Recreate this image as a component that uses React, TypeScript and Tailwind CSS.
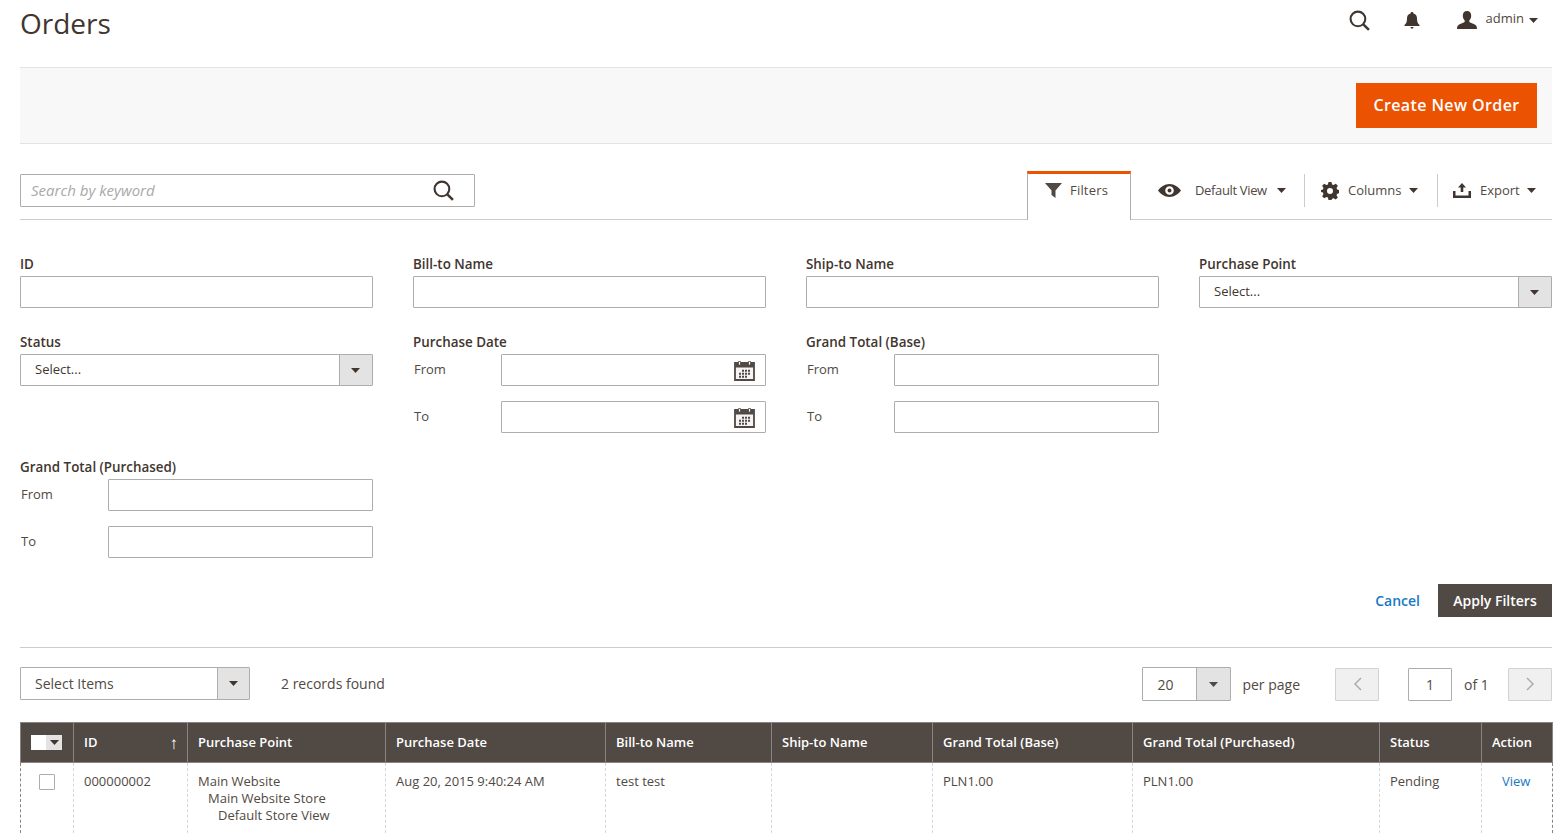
import { ReactNode } from "react";

const Caret = ({ className = "" }: { className?: string }) => (
  <svg width="9" height="5" viewBox="0 0 9 5" className={className}>
    <path d="M0 0h9L4.5 5z" fill="currentColor" />
  </svg>
);

const SearchIcon = ({ size }: { size: number }) => (
  <svg width={size} height={size} viewBox="0 0 20 20" fill="none" stroke="#41362f" strokeWidth="2">
    <circle cx="8.5" cy="8.5" r="7" />
    <path d="M13.6 13.6L19 19" strokeWidth="2.4" />
  </svg>
);

const CalendarIcon = () => (
  <svg width="21" height="21" viewBox="0 0 21 21" className="absolute right-[10px] top-[5px]">
    <path d="M1 3h19v17H1z" fill="#f4f4f4" stroke="#514943" strokeWidth="1.8" />
    <path d="M1 3h19v4.500H1z" fill="#514943" />
    <path d="M4.500 1.500h2v3.500h-2zM14.500 1.500h2v3.500h-2z" fill="#fff" stroke="#514943" strokeWidth="0.8" />
    <path d="M8 9.800h2v2H8zM11 9.800h2v2h-2zM14 9.800h2v2h-2zM5 12.800h2v2H5zM8 12.800h2v2H8zM11 12.800h2v2h-2zM14 12.800h2v2h-2zM5 15.800h2v2H5zM8 15.800h2v2H8zM11 15.800h2v2h-2z" fill="#514943" />
  </svg>
);

const Label = ({ children }: { children: ReactNode }) => (
  <div className="h-[24px] text-[13.4px] leading-[24px] font-semibold text-[#41362f]">{children}</div>
);

const TextBox = ({ children }: { children?: ReactNode }) => (
  <div className="relative h-[32px] w-full rounded-[1px] border border-[#adadad] bg-white">{children}</div>
);

const TextField = ({ label }: { label: string }) => (
  <div>
    <Label>{label}</Label>
    <TextBox />
  </div>
);

const SelectField = ({ label }: { label: string }) => (
  <div>
    <Label>{label}</Label>
    <div className="flex h-[32px] rounded-[1px] border border-[#adadad] bg-white text-[13px] text-[#41362f]">
      <div className="flex-1 pl-[14px] leading-[28px]">Select...</div>
      <div className="flex w-[33px] items-center justify-center border-l border-[#adadad] bg-[#e3e3e3] pr-[2px] text-[#41362f]">
        <Caret />
      </div>
    </div>
  </div>
);

const RangeField = ({ label, calendar }: { label: string; calendar?: boolean }) => (
  <div>
    <Label>{label}</Label>
    <div className="flex flex-col gap-[15px]">
      {["From", "To"].map((bound) => (
        <div key={bound} className="flex items-center">
          <span className="w-[88px] pl-px text-[13px] text-[#514943]">{bound}</span>
          <div className="flex-1">
            <TextBox>{calendar && <CalendarIcon />}</TextBox>
          </div>
        </div>
      ))}
    </div>
  </div>
);

const columns = [
  { label: "ID", width: 114 },
  { label: "Purchase Point", width: 198 },
  { label: "Purchase Date", width: 220 },
  { label: "Bill-to Name", width: 166 },
  { label: "Ship-to Name", width: 161 },
  { label: "Grand Total (Base)", width: 200 },
  { label: "Grand Total (Purchased)", width: 247 },
  { label: "Status", width: 102 },
  { label: "Action", width: 71 },
];

export default function App() {
  return (
    <div className="h-[833px] overflow-hidden bg-white pl-[20px] pr-[13px] font-['Open_Sans',sans-serif] text-[#41362f]">
      <header className="flex h-[67px] justify-between">
        <h1 className="pt-[5px] text-[28px] leading-[36px] font-normal text-[#41362f]">Orders</h1>
        <div className="flex h-[40px] items-center pr-[14px] text-[#41362f]">
          <SearchIcon size={21} />
          <svg width="16" height="17" viewBox="0 0 16 17" className="ml-[34px]">
            <path d="M8 0c1 0 1.500.7 1.500 1.400C12 2 13 4 13 6.500c0 3 .6 5 2.500 6.500v1H.5v-1C2.400 11.500 3 9.500 3 6.500 3 4 4 2 6.500 1.400 6.500.7 7 0 8 0zM6.500 15h3c0 1-.7 1.700-1.500 1.700S6.500 16 6.500 15z" fill="#41362f" />
          </svg>
          <svg width="20" height="18" viewBox="0 0 20 18" className="ml-[37px]">
            <path d="M10 0c2.700 0 4.200 2 4.200 4.800 0 2-.8 3.700-1.900 4.700v1.300c0 .9 5 2 6.700 3.700.5.500 1 1.500 1 3.500H0c0-2 .5-3 1-3.500 1.700-1.700 6.700-2.800 6.700-3.700V9.500C6.600 8.500 5.800 6.800 5.800 4.800 5.800 2 7.300 0 10 0z" fill="#41362f" />
          </svg>
          <span className="-mt-[2px] ml-[9px] text-[13px] text-[#514943]">admin</span>
          <Caret className="ml-[5px]" />
        </div>
      </header>

      <div className="flex h-[77px] items-center justify-end border-y border-[#e3e3e3] bg-[#f8f8f8] pr-[15px]">
        <button className="h-[45px] w-[181px] bg-[#eb5202] pb-[2px] text-[16px] font-semibold tracking-[0.4px] text-white">Create New Order</button>
      </div>

      <div className="flex h-[76px] items-end justify-between border-b border-[#cccccc]">
        <div className="mb-[12px] flex h-[33px] w-[455px] items-center justify-between rounded-[1px] border border-[#adadad] pl-[10px] pr-[20px]">
          <span className="text-[15px] text-[#a9a9a9] italic">Search by keyword</span>
          <SearchIcon size={21} />
        </div>
        <div className="flex items-end text-[13px] text-[#514943]">
          <div className="-mb-px flex h-[49px] w-[104px] items-center border-x border-t-[3px] border-x-[#adadad] border-t-[#eb5202] bg-white pb-[13px] pl-[17px]">
            <svg width="17" height="15" viewBox="0 0 17 15">
              <path d="M0 0h17L10.500 7.500V15L6.500 12V7.500z" fill="#514943" />
            </svg>
            <span className="ml-[8px] tracking-[0.2px]">Filters</span>
          </div>
          <div className="mb-[12px] flex h-[33px] items-center pl-[27px] pr-[18px]">
            <svg width="23" height="13" viewBox="0 0 23 13">
              <path fillRule="evenodd" d="M11.500 0C16.500 0 20.500 3 23 6.500 20.500 10 16.500 13 11.500 13S2.500 10 0 6.500C2.500 3 6.500 0 11.500 0zM11.500 2.200a4.300 4.300 0 100 8.600 4.300 4.300 0 000-8.600zM11.500 4.500a2 2 0 110 4 2 2 0 010-4z" fill="#41362f" />
            </svg>
            <span className="ml-[14px] w-[72px] tracking-[-0.35px] whitespace-nowrap">Default View</span>
            <Caret className="ml-[10px] text-[#41362f]" />
          </div>
          <div className="mb-[12px] flex h-[33px] items-center border-l border-[#cccccc] pl-[16px] pr-[19px]">
            <svg width="18" height="18" viewBox="0 0 24 24">
              <path fillRule="evenodd" d="M10 0h4l.8 3.300 2 .8L19.700 2.300l2.800 2.800-1.800 2.900.8 2 3.300.8v4l-3.300.8-.8 2 1.800 2.900-2.800 2.800-2.900-1.800-2 .8L14 24h-4l-.8-3.300-2-.8-2.900 1.800-2.800-2.800L3.300 16l-.8-2L0 13.200V10.800l2.500-.8.8-2-1.800-2.900 2.800-2.800 2.900 1.800 2-.8zM12 8a4 4 0 100 8 4 4 0 000-8z" fill="#41362f" />
            </svg>
            <span className="ml-[9px] w-[53px]">Columns</span>
            <Caret className="ml-[8px] text-[#41362f]" />
          </div>
          <div className="mb-[12px] flex h-[33px] items-center border-l border-[#cccccc] pl-[15px] pr-[16px]">
            <svg width="18" height="15" viewBox="0 0 18 15">
              <path d="M9 0l4 4.500h-2.700V9H7.700V4.500H5zM0 8h2.500v4.500h13V8H18v7H0z" fill="#41362f" />
            </svg>
            <span className="ml-[9px] w-[40px]">Export</span>
            <Caret className="ml-[7px] text-[#41362f]" />
          </div>
        </div>
      </div>

      <div className="grid grid-cols-[353px_353px_353px_353px] gap-x-[40px] gap-y-[22px] pt-[32px]">
        <TextField label="ID" />
        <TextField label="Bill-to Name" />
        <TextField label="Ship-to Name" />
        <SelectField label="Purchase Point" />
        <SelectField label="Status" />
        <RangeField label="Purchase Date" calendar />
        <RangeField label="Grand Total (Base)" />
        <div />
        <div className="col-start-1">
          <RangeField label="Grand Total (Purchased)" />
        </div>
      </div>

      <div className="flex items-center justify-end pt-[26px]">
        <a className="text-[14px] font-semibold text-[#1979c3]">Cancel</a>
        <button className="ml-[18px] h-[33px] w-[114px] bg-[#514943] text-[14px] font-semibold text-white">Apply Filters</button>
      </div>

      <div className="mt-[30px] flex h-[75px] items-start justify-between border-t border-[#cccccc] pt-[19px] text-[14px] text-[#514943]">
        <div className="flex items-center">
          <div className="flex h-[33px] w-[230px] rounded-[1px] border border-[#adadad]">
            <span className="flex-1 pl-[14px] leading-[31px]">Select Items</span>
            <div className="flex w-[32px] items-center justify-center border-l border-[#adadad] bg-[#e3e3e3] text-[#41362f]">
              <Caret />
            </div>
          </div>
          <span className="ml-[31px]">2 records found</span>
        </div>
        <div className="flex items-center">
          <div className="flex h-[34px] w-[89px] rounded-[1px] border border-[#adadad]">
            <span className="flex-1 pl-[14px] leading-[33px]">20</span>
            <div className="flex w-[34px] items-center justify-center border-l border-[#adadad] bg-[#e3e3e3] text-[#514943]">
              <Caret />
            </div>
          </div>
          <span className="ml-[11px]">per page</span>
          <div className="ml-[35px] flex h-[33px] w-[44px] items-center justify-center rounded-[1px] border border-[#d1d1d1] bg-[#f0f0f0]">
            <svg width="9" height="14" viewBox="0 0 9 14" fill="none" stroke="#a8a8a8" strokeWidth="1.400">
              <path d="M8 1L2 7l6 6" />
            </svg>
          </div>
          <div className="ml-[29px] flex h-[33px] w-[44px] items-center justify-center rounded-[1px] border border-[#adadad]">1</div>
          <span className="ml-[12px] w-[24px] whitespace-nowrap">of 1</span>
          <div className="ml-[20px] flex h-[33px] w-[44px] items-center justify-center rounded-[1px] border border-[#d1d1d1] bg-[#f0f0f0]">
            <svg width="9" height="14" viewBox="0 0 9 14" fill="none" stroke="#a8a8a8" strokeWidth="1.400">
              <path d="M1 1l6 6-6 6" />
            </svg>
          </div>
        </div>
      </div>

      <table className="w-[1532px] table-fixed border-collapse text-[13px] text-[#514943]">
        <colgroup>
          <col className="w-[53px]" />
          {columns.map((col) => (
            <col key={col.label} style={{ width: col.width }} />
          ))}
        </colgroup>
        <thead>
          <tr className="h-[40px] bg-[#514943] text-left text-white">
            <th className="border border-[#8a837f] pl-[10px]">
              <div className="flex h-[15px] w-[31px]">
                <div className="w-[15px] bg-white" />
                <div className="flex w-[16px] items-center justify-center bg-[#e3e3e3] text-[#41362f]">
                  <Caret />
                </div>
              </div>
            </th>
            {columns.map((col) => (
              <th key={col.label} className="relative border border-[#8a837f] pl-[10px] font-semibold">
                {col.label}
                {col.label === "ID" && <span className="absolute right-[9px] top-[7px] text-[17px] font-normal">↑</span>}
              </th>
            ))}
          </tr>
        </thead>
        <tbody>
          <tr className="h-[70px] align-top leading-[17px]">
            <td className="border-x border-dashed border-x-[#d6d6d6] border-l-[#8a837f] pt-[11px] pl-[18px]">
              <div className="h-[16px] w-[16px] rounded-[1px] border border-[#adadad]" />
            </td>
            <td className="border-x border-dashed border-[#d6d6d6] pt-[10px] pl-[10px]">000000002</td>
            <td className="border-x border-dashed border-[#d6d6d6] pt-[10px] pl-[10px]">
              <div>Main Website</div>
              <div className="pl-[10px]">Main Website Store</div>
              <div className="pl-[20px]">Default Store View</div>
            </td>
            <td className="border-x border-dashed border-[#d6d6d6] pt-[10px] pl-[10px]">Aug 20, 2015 9:40:24 AM</td>
            <td className="border-x border-dashed border-[#d6d6d6] pt-[10px] pl-[10px]">test test</td>
            <td className="border-x border-dashed border-[#d6d6d6] pt-[10px] pl-[10px]"></td>
            <td className="border-x border-dashed border-[#d6d6d6] pt-[10px] pl-[10px]">PLN1.00</td>
            <td className="border-x border-dashed border-[#d6d6d6] pt-[10px] pl-[10px]">PLN1.00</td>
            <td className="border-x border-dashed border-[#d6d6d6] pt-[10px] pl-[10px]">Pending</td>
            <td className="border-x border-dashed border-x-[#d6d6d6] border-r-[#8a837f] pt-[10px] pl-[20px] text-[#1979c3]">View</td>
          </tr>
        </tbody>
      </table>
    </div>
  );
}
